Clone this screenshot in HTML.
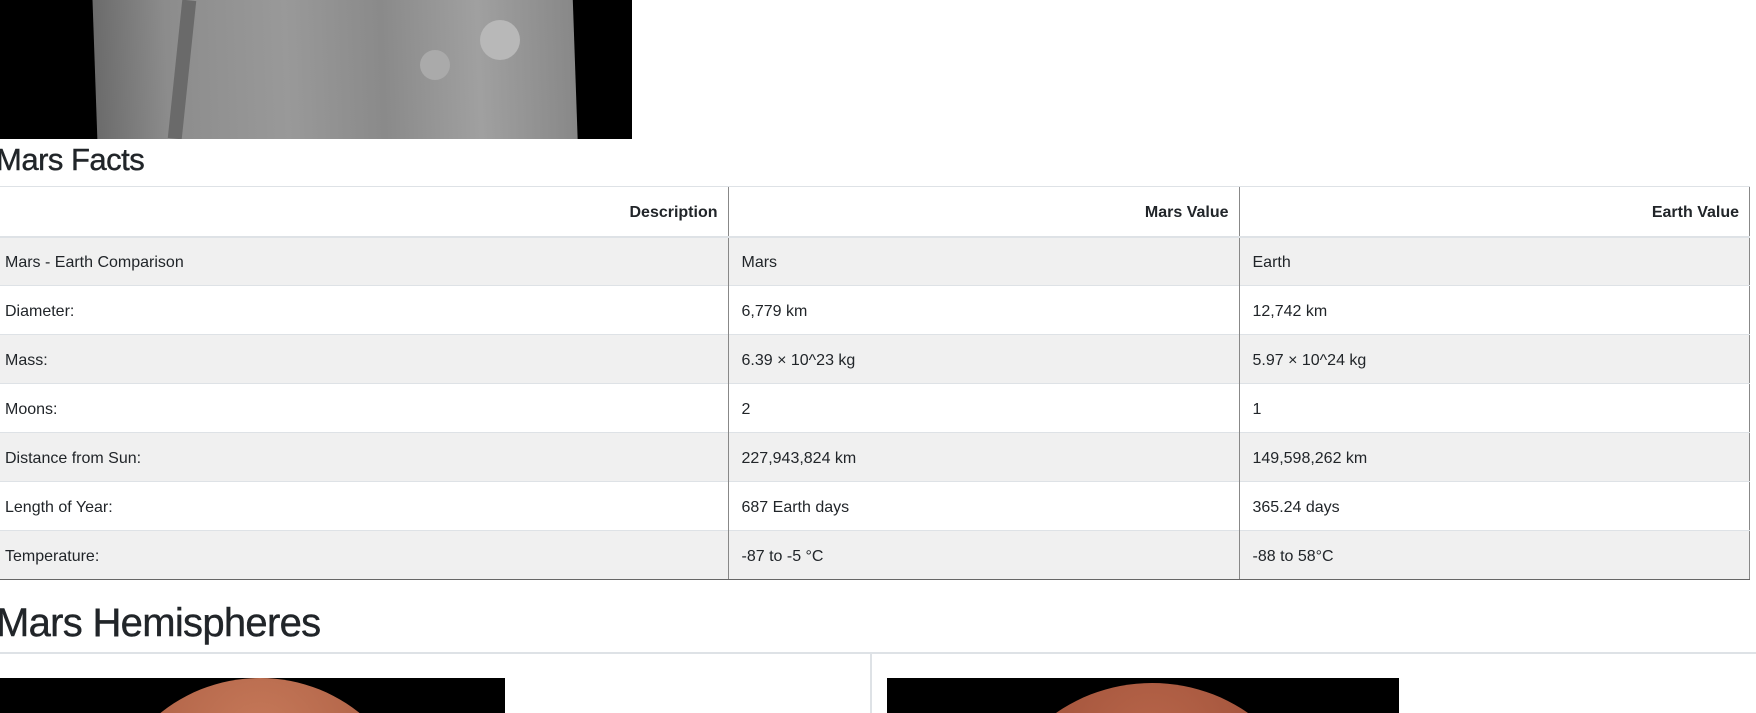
<!DOCTYPE html>
<html><head><meta charset="utf-8"><style>
*{margin:0;padding:0;box-sizing:border-box}
html,body{width:1756px;height:713px;overflow:hidden}
body{background:#fff;font-family:"Liberation Sans",sans-serif;color:#212529;position:relative}
.a{position:absolute}
h2{position:absolute;font-weight:500;white-space:nowrap;-webkit-text-stroke:0.4px #212529}
table{position:absolute;left:-1px;top:186px;width:1751px;border-collapse:collapse;font-size:16px}
td,th{border-left:1px solid #888;border-top:1px solid #dee2e6;height:49px;padding:4px 10px 0 6px;white-space:nowrap}
th{text-align:right;font-weight:bold;height:50px;border-top:1px solid #dee2e6;border-bottom:2px solid #dee2e6}
td:first-child,th:first-child{border-left:none}
tr:last-child td{border-bottom:1px solid #666}
table{border-right:1px solid #888}
tbody tr:nth-child(odd){background:#f0f0f0}
td:nth-child(2),td:nth-child(3){padding-left:13px}
</style></head><body>
<div class="a" style="left:0;top:0;width:632px;height:139px;background:#000;overflow:hidden">
<div class="a" style="left:95px;top:-20px;width:480px;height:175px;background:linear-gradient(90deg,#6b6b6b,#8c8c8c 15%,#999 40%,#8a8a8a 60%,#a0a0a0 80%,#888);transform:rotate(-2deg)"></div>
<div class="a" style="left:175px;top:0;width:14px;height:139px;background:#6a6a6a;transform:rotate(6deg)"></div>
<div class="a" style="left:480px;top:20px;width:40px;height:40px;background:#b8b8b8;border-radius:50%"></div>
<div class="a" style="left:420px;top:50px;width:30px;height:30px;background:#aaa;border-radius:50%"></div>
</div>
<h2 style="left:-4px;top:140px;font-size:31px;line-height:40px;letter-spacing:-0.5px">Mars Facts</h2>
<table>
<thead><tr><th>Description</th><th>Mars Value</th><th>Earth Value</th></tr></thead>
<tbody>
<tr><td style="width:729px">Mars - Earth Comparison</td><td style="width:511px">Mars</td><td>Earth</td></tr>
<tr><td>Diameter:</td><td>6,779 km</td><td>12,742 km</td></tr>
<tr><td>Mass:</td><td>6.39 × 10^23 kg</td><td>5.97 × 10^24 kg</td></tr>
<tr><td>Moons:</td><td>2</td><td>1</td></tr>
<tr><td>Distance from Sun:</td><td>227,943,824 km</td><td>149,598,262 km</td></tr>
<tr><td>Length of Year:</td><td>687 Earth days</td><td>365.24 days</td></tr>
<tr><td>Temperature:</td><td>-87 to -5 °C</td><td>-88 to 58°C</td></tr>
</tbody></table>
<h2 style="left:-4px;top:598px;font-size:40px;line-height:50px;letter-spacing:-0.7px">Mars Hemispheres</h2>
<div class="a" style="left:0;top:652px;width:1756px;height:2px;background:#dee2e6"></div>
<div class="a" style="left:870px;top:653px;width:2px;height:60px;background:#dee2e6"></div>
<div class="a" style="left:0;top:678px;width:505px;height:35px;background:#000;overflow:hidden">
<div class="a" style="left:105px;top:0;width:310px;height:300px;border-radius:50%;background:radial-gradient(circle at 50% 20%,#c77a5a,#a85a40 60%)"></div></div>
<div class="a" style="left:887px;top:678px;width:512px;height:35px;background:#000;overflow:hidden">
<div class="a" style="left:105px;top:5px;width:320px;height:300px;border-radius:50%;background:radial-gradient(circle at 50% 20%,#b8664a,#9a4c36 60%)"></div></div>
</body></html>
